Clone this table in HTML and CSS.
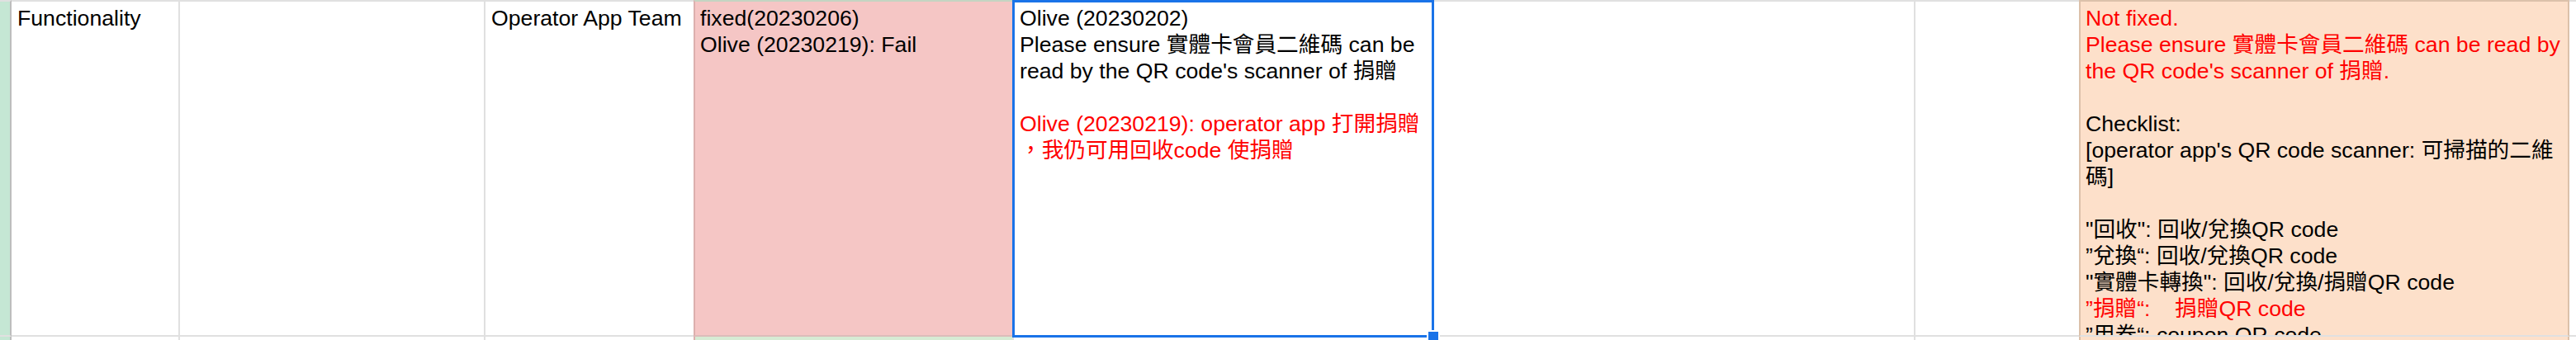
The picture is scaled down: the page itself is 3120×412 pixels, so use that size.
FILE: index.html
```html
<!DOCTYPE html>
<html lang="zh-Hant">

<head>
  <meta charset="UTF-8">
  <meta name="viewport" content="width=device-width, initial-scale=1.0">
  <title>QA Sheet - Operator App</title>
  <link rel="stylesheet" href="styles.css">
</head>

<body>
  <div class="sheet">
    <div class="row main">
      <div class="cell col-a"></div>
      <div class="cell col-b">Functionality</div>
      <div class="cell col-c"></div>
      <div class="cell col-d">Operator App Team</div>
      <div class="cell col-e">fixed(20230206)<br>Olive (20230219): Fail</div>
      <div class="cell col-f selected">
        Olive (20230202)<br>
        Please ensure 實體卡會員二維碼 can be<br>
        read by the QR code's scanner of 捐贈<br>
        <br>
        <span class="red">Olive (20230219): operator app 打開捐贈<br>，我仍可用回收code 使捐贈</span>
        <span class="fill-handle"></span>
      </div>
      <div class="cell col-g"></div>
      <div class="cell col-h"></div>
      <div class="cell col-i">
        <span class="red">Not fixed.<br>
          Please ensure 實體卡會員二維碼 can be read by<br>
          the QR code's scanner of 捐贈.</span><br>
        <br>
        Checklist:<br>
        [operator app's QR code scanner: 可掃描的二維<br>
        碼]<br>
        <br>
        "回收": 回收/兌換QR code<br>
        ”兌換“: 回收/兌換QR code<br>
        "實體卡轉換": 回收/兌換/捐贈QR code<br>
        <span class="red">”捐贈“:&nbsp;&nbsp;&nbsp; 捐贈QR code</span><br>
        ”用券“: coupon QR code
      </div>
      <div class="cell col-j"></div>
    </div>

    <!-- next row, only its top edge is in view -->
    <div class="row next">
      <div class="cell col-a"></div>
      <div class="cell col-b"></div>
      <div class="cell col-c"></div>
      <div class="cell col-d"></div>
      <div class="cell col-e"></div>
      <div class="cell col-f"></div>
      <div class="cell col-g"></div>
      <div class="cell col-h"></div>
      <div class="cell col-i"></div>
      <div class="cell col-j"></div>
    </div>
  </div>
</body>

</html>
```

FILE: styles.css
```css
html,
body {
  margin: 0;
  padding: 0;
  background-color: #fff;
  overflow: hidden;
}

.sheet {
  width: 3120px;
  font-family: 'Liberation Sans', Arial, 'Noto Sans CJK SC', sans-serif;
  font-size: 26.67px;
  line-height: 32px;
  color: #000;
}

.row {
  display: grid;
  grid-template-columns: 14px 204px 370px 252px 388px 508px 584px 198px 594px 8px;
}

.row.main {
  height: 408px;
}

.row.next {
  height: 40px;
}

.cell {
  box-sizing: border-box;
  padding: 4px 7px 0;
  border-right: 2px solid #e0e0e0;
  overflow: hidden;
  white-space: nowrap;
}

.main .cell {
  border-top: 2px solid #e0e0e0;
  border-bottom: 2px solid #e0e0e0;
}

.col-a {
  background-color: #c5e7d4;
  border-right-color: #bdbdbd;
  padding: 0;
}

.col-d {
  border-right: none;
}

.col-e {
  background-color: #f5c6c5;
  border-left: 2px solid #dcb0ae;
  padding-left: 6px;
}

.main .col-e {
  border-top-color: #c4d4c2;
  border-bottom-color: #dcbcba;
}

.next .col-e {
  background-color: #d6ebd4;
}

.col-h {
  border-right: none;
}

.col-i {
  background-color: #fde0ca;
  border-left: 2px solid #dcc1aa;
  border-right: 2px solid #dcc1aa;
  padding-left: 6px;
}

.main .col-i {
  border-top-color: #dcc1aa;
}

.col-j {
  border-right: none;
}

.red {
  color: #ff0000;
}

/* selected cell outline */
.selected {
  position: relative;
  overflow: visible;
}

.selected::after {
  content: '';
  position: absolute;
  left: -2px;
  top: -2px;
  right: -3px;
  bottom: -3px;
  border: 3px solid #1a73e8;
  pointer-events: none;
  z-index: 2;
}

.fill-handle {
  position: absolute;
  right: -10px;
  bottom: -10px;
  width: 12px;
  height: 12px;
  background-color: #1a73e8;
  border: 2px solid #fff;
  z-index: 3;
}
```
